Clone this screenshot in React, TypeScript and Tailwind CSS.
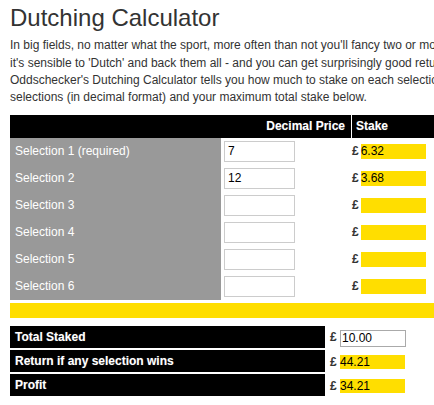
import { useState } from "react";

const selections = [
  { label: "Selection 1 (required)", price: "7", stake: "6.32" },
  { label: "Selection 2", price: "12", stake: "3.68" },
  { label: "Selection 3", price: "", stake: "" },
  { label: "Selection 4", price: "", stake: "" },
  { label: "Selection 5", price: "", stake: "" },
  { label: "Selection 6", price: "", stake: "" },
];

const App = () => {
  const [total, setTotal] = useState("10.00");

  return (
    <main className="w-[434px] h-[405px] overflow-hidden bg-white font-['Liberation_Sans',Arial,sans-serif] text-[#333]">
      <div className="w-[460px] pl-[10px]">
        <h1 className="mt-[5px] text-[24px] leading-[1.1] text-[#333]">
          Dutching Calculator
        </h1>
        <p className="mt-[6px] text-[12px] leading-[17.14px] whitespace-nowrap">
          In big fields, no matter what the sport, more often than not you'll fancy two or more
          <br />
          it's sensible to 'Dutch' and back them all - and you can get surprisingly good returns.
          <br />
          Oddschecker's Dutching Calculator tells you how much to stake on each selection. Just enter
          <br />
          selections (in decimal format) and your maximum total stake below.
        </p>

        <div className="mt-[9px] w-[440px] text-[12px]">
          <div className="flex h-[23px] bg-black text-white font-bold [text-shadow:0_0_1px_#555]">
            <div className="w-[341px] flex items-center justify-end pr-[6px]">
              Decimal Price
            </div>
            <div className="w-[1px] bg-white" />
            <div className="flex-1 flex items-center pl-[4px]">Stake</div>
          </div>

          {selections.map((s, i) => (
            <div key={i} className="flex h-[27px]">
              <div className="w-[211px] bg-[#999999] text-white flex items-center pl-[5px]">
                {s.label}
              </div>
              <div className="w-[130px] pl-[3px] pt-[3px]">
                <input
                  defaultValue={s.price}
                  className="w-[71px] h-[21px] border border-[#cccccc] px-[3px] text-[12px] text-black outline-none"
                />
              </div>
              <div className="flex-1 flex items-start pl-[1px] pt-[6px]">
                <span className="font-bold leading-[15px] text-[#333]">£</span>
                <span className="ml-[2px] w-[65px] h-[15px] bg-[#ffde00] leading-[15px] text-black">
                  {s.stake}
                </span>
              </div>
            </div>
          ))}

          <div className="mt-[3px] h-[15px] bg-[#ffde00]" />
        </div>

        <div className="mt-[8px] flex flex-col gap-[2px] text-[12px]">
          <div className="flex h-[22px]">
            <div className="w-[315px] bg-black text-white font-bold flex items-center pl-[5px] [text-shadow:0_0_1px_#555]">
              Total Staked
            </div>
            <div className="flex items-start pl-[5px] pt-[4px]">
              <span className="w-[10px] font-bold leading-[14px] text-[#333]">£</span>
              <input
                value={total}
                onChange={(e) => setTotal(e.target.value)}
                className="w-[66px] h-[17px] border border-[#aaaaaa] px-[1px] text-[12px] text-black outline-none"
              />
            </div>
          </div>
          {[
            { label: "Return if any selection wins", value: "44.21" },
            { label: "Profit", value: "34.21" },
          ].map((r) => (
            <div key={r.label} className="flex h-[22px]">
              <div className="w-[315px] bg-black text-white font-bold flex items-center pl-[5px] [text-shadow:0_0_1px_#555]">
                {r.label}
              </div>
              <div className="flex items-start pl-[5px] pt-[5px]">
                <span className="w-[10px] font-bold leading-[14px] text-[#333]">£</span>
                <span className="w-[65px] h-[14px] bg-[#ffde00] leading-[14px] text-black">
                  {r.value}
                </span>
              </div>
            </div>
          ))}
        </div>
      </div>
    </main>
  );
};

export default App;
